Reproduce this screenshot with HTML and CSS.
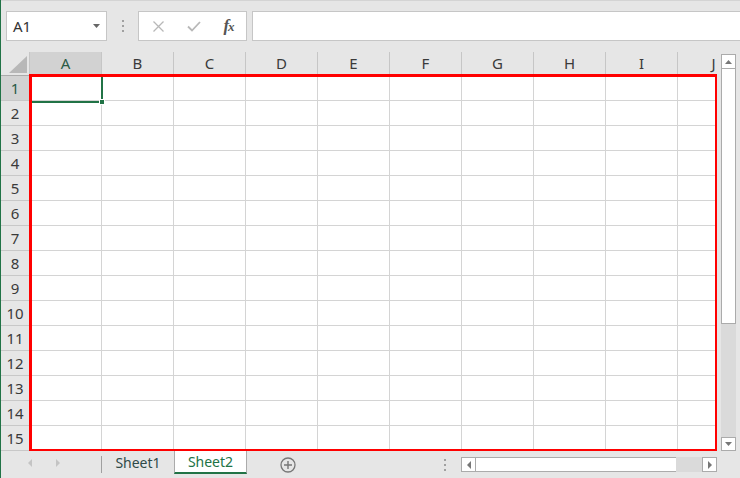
FILE: index.html
```html
<!DOCTYPE html>
<html lang="ja">
<head>
    <meta charset="UTF-8">
    <meta name="viewport" content="width=device-width, initial-scale=1.0">
    <title>Book1 - Excel</title>
    <link rel="stylesheet" href="styles.css">
</head>
<body>
<div class="app">
    <div class="toolbar">
        <div class="namebox">
            <span>A1</span>
            <svg width="7" height="4" viewBox="0 0 7 4"><path d="M0 0h7L3.5 4z" fill="#666"/></svg>
        </div>
        <div class="grip"><i></i><i></i><i></i></div>
        <div class="fbuttons">
            <div class="fbtn">
                <svg width="11" height="11" viewBox="0 0 11 11"><path d="M0.5 0.5L10.5 10.5M10.5 0.5L0.5 10.5" stroke="#b8b8b8" stroke-width="1.3" fill="none"/></svg>
            </div>
            <div class="fbtn">
                <svg width="14" height="11" viewBox="0 0 14 11"><path d="M1 5.5L5 9.5L13 1" stroke="#b8b8b8" stroke-width="1.8" fill="none"/></svg>
            </div>
            <div class="fbtn"><span class="fx">f<span>x</span></span></div>
        </div>
        <div class="formula"></div>
    </div>

    <div class="main">
        <div class="sheet">
            <div class="row head">
                <div class="corner">
                    <svg width="18" height="17" viewBox="0 0 18 17"><path d="M18 0V17H0z" fill="#b8b8b8"/></svg>
                </div>
                <div class="ch sel">A</div><div class="ch">B</div><div class="ch">C</div><div class="ch">D</div><div class="ch">E</div><div class="ch">F</div><div class="ch">G</div><div class="ch">H</div><div class="ch">I</div><div class="ch">J</div>
            </div>
            <div class="row"><div class="rh sel">1</div><i></i><i></i><i></i><i></i><i></i><i></i><i></i><i></i><i></i><i></i></div>
            <div class="row"><div class="rh">2</div><i></i><i></i><i></i><i></i><i></i><i></i><i></i><i></i><i></i><i></i></div>
            <div class="row"><div class="rh">3</div><i></i><i></i><i></i><i></i><i></i><i></i><i></i><i></i><i></i><i></i></div>
            <div class="row"><div class="rh">4</div><i></i><i></i><i></i><i></i><i></i><i></i><i></i><i></i><i></i><i></i></div>
            <div class="row"><div class="rh">5</div><i></i><i></i><i></i><i></i><i></i><i></i><i></i><i></i><i></i><i></i></div>
            <div class="row"><div class="rh">6</div><i></i><i></i><i></i><i></i><i></i><i></i><i></i><i></i><i></i><i></i></div>
            <div class="row"><div class="rh">7</div><i></i><i></i><i></i><i></i><i></i><i></i><i></i><i></i><i></i><i></i></div>
            <div class="row"><div class="rh">8</div><i></i><i></i><i></i><i></i><i></i><i></i><i></i><i></i><i></i><i></i></div>
            <div class="row"><div class="rh">9</div><i></i><i></i><i></i><i></i><i></i><i></i><i></i><i></i><i></i><i></i></div>
            <div class="row"><div class="rh">10</div><i></i><i></i><i></i><i></i><i></i><i></i><i></i><i></i><i></i><i></i></div>
            <div class="row"><div class="rh">11</div><i></i><i></i><i></i><i></i><i></i><i></i><i></i><i></i><i></i><i></i></div>
            <div class="row"><div class="rh">12</div><i></i><i></i><i></i><i></i><i></i><i></i><i></i><i></i><i></i><i></i></div>
            <div class="row"><div class="rh">13</div><i></i><i></i><i></i><i></i><i></i><i></i><i></i><i></i><i></i><i></i></div>
            <div class="row"><div class="rh">14</div><i></i><i></i><i></i><i></i><i></i><i></i><i></i><i></i><i></i><i></i></div>
            <div class="row"><div class="rh">15</div><i></i><i></i><i></i><i></i><i></i><i></i><i></i><i></i><i></i><i></i></div>

            <!-- active cell A1 -->
            <div class="cursor"></div>
            <div class="handle"></div>
            <!-- red highlight -->
            <div class="mark"></div>
        </div>

        <div class="vscroll">
            <div class="sbtn">
                <svg width="7" height="4" viewBox="0 0 7 4"><path d="M3.5 0L7 4H0z" fill="#777"/></svg>
            </div>
            <div class="vthumb"></div>
            <div class="vtrack"></div>
            <div class="sbtn down">
                <svg width="7" height="4" viewBox="0 0 7 4"><path d="M0 0h7L3.5 4z" fill="#777"/></svg>
            </div>
        </div>
    </div>

    <div class="tabbar">
        <div class="tabnav">
            <svg width="4" height="8" viewBox="0 0 4 8"><path d="M4 0V8L0 4z" fill="#c4c4c4"/></svg>
            <svg width="4" height="8" viewBox="0 0 4 8"><path d="M0 0V8L4 4z" fill="#c4c4c4"/></svg>
        </div>
        <div class="tabsep"></div>
        <div class="tab">Sheet1</div>
        <div class="tab active">Sheet2</div>
        <div class="addsheet">
            <svg width="16" height="16" viewBox="0 0 16 16">
                <circle cx="8" cy="8" r="7" stroke="#777" stroke-width="1.3" fill="none"/>
                <path d="M8 4V12M4 8H12" stroke="#777" stroke-width="1.4"/>
            </svg>
        </div>
        <div class="spacer"></div>
        <div class="grip small"><i></i><i></i><i></i></div>
        <div class="hscroll">
            <div class="sbtn">
                <svg width="4" height="8" viewBox="0 0 4 8"><path d="M4 0V8L0 4z" fill="#777"/></svg>
            </div>
            <div class="hthumb"></div>
            <div class="htrack"></div>
            <div class="sbtn">
                <svg width="4" height="8" viewBox="0 0 4 8"><path d="M0 0V8L4 4z" fill="#777"/></svg>
            </div>
        </div>
    </div>
</div>
</body>
</html>
```

FILE: styles.css
```css
body {
    margin: 0;
    padding: 0;
    background-color: #e6e6e6;
    font-family: "Noto Sans", "Noto Sans CJK JP", sans-serif;
    color: #3a3a3a;
    overflow: hidden;
}
.app {
    width: 739px;
    height: 478px;
    border-left: 1px solid #217346;
    display: flex;
    flex-direction: column;
    overflow: hidden;
}

/* name box + formula bar */
.toolbar {
    height: 52px;
    flex: none;
    box-sizing: border-box;
    border-top: 1px solid #d4d4d4;
    padding: 10px 0 0 5px;
    display: flex;
    align-items: flex-start;
}
.namebox {
    width: 101px;
    height: 30px;
    box-sizing: border-box;
    background-color: #fff;
    border: 1px solid #c6c6c6;
    padding: 0 6px;
    display: flex;
    align-items: center;
    justify-content: space-between;
    font-size: 15px;
    color: #333;
}
.grip {
    width: 2px;
    height: 30px;
    margin: 0 14px 0 15px;
    display: flex;
    flex-direction: column;
    justify-content: center;
    gap: 3px;
}
.grip i {
    display: block;
    width: 2px;
    height: 2px;
    background-color: #a0a0a0;
}
.fbuttons {
    width: 109px;
    height: 30px;
    box-sizing: border-box;
    background-color: #fff;
    border: 1px solid #c6c6c6;
    padding-left: 2px;
    display: flex;
}
.fbtn {
    width: 35px;
    display: flex;
    align-items: center;
    justify-content: center;
}
.fx {
    font-family: "Liberation Serif", serif;
    font-style: italic;
    font-weight: bold;
    font-size: 17px;
    letter-spacing: -1px;
    color: #555;
}
.fx span {
    font-size: 13px;
}
.formula {
    flex: 1;
    height: 30px;
    box-sizing: border-box;
    margin: 0 -2px 0 5px;
    background-color: #fff;
    border: 1px solid #c6c6c6;
}

/* grid */
.main {
    height: 399px;
    flex: none;
    display: flex;
}
.sheet {
    width: 716px;
    flex: none;
    position: relative;
    overflow: hidden;
    background-color: #fff;
}
.row {
    display: flex;
    height: 25px;
}
.row i {
    width: 72px;
    flex: none;
    box-sizing: border-box;
    border-left: 1px solid #d4d4d4;
    border-bottom: 1px solid #d4d4d4;
}
.rh {
    width: 28px;
    flex: none;
    box-sizing: border-box;
    background-color: #e6e6e6;
    border-bottom: 1px solid #c8c8c8;
    text-align: center;
    font-size: 15px;
    line-height: 24px;
}
.head {
    height: 24px;
    background-color: #e6e6e6;
}
.corner {
    width: 28px;
    flex: none;
    box-sizing: border-box;
    border-bottom: 1px solid #ababab;
    padding: 4px 0 0 8px;
}
.corner svg {
    display: block;
}
.ch {
    width: 72px;
    flex: none;
    box-sizing: border-box;
    border-left: 1px solid #c6c6c6;
    border-bottom: 1px solid #ababab;
    text-align: center;
    font-size: 15px;
    line-height: 23px;
}
.sel {
    background-color: #d2d2d2;
    color: #2a5a46;
}
.cursor {
    position: absolute;
    left: 28px;
    top: 22px;
    width: 74px;
    height: 29px;
    box-sizing: border-box;
    border: 2px solid #217346;
}
.handle {
    position: absolute;
    left: 98px;
    top: 47px;
    width: 6px;
    height: 6px;
    box-sizing: border-box;
    background-color: #217346;
    border: 1px solid #fff;
}
.mark {
    position: absolute;
    left: 28px;
    top: 22px;
    width: 688px;
    height: 377px;
    box-sizing: border-box;
    border: 3px solid #ff0000;
    border-right-width: 2px;
    border-bottom-width: 2px;
}

/* scroll bars */
.vscroll {
    flex: 1;
    padding: 2px 0 0 4px;
    display: flex;
    flex-direction: column;
    width: 15px;
}
.vscroll > div {
    width: 15px;
}
.sbtn {
    width: 15px;
    height: 15px;
    flex: none;
    box-sizing: border-box;
    background-color: #fff;
    border: 1px solid #ababab;
    display: flex;
    align-items: center;
    justify-content: center;
}
.sbtn.down {
    height: 14px;
}
.vthumb {
    height: 255px;
    flex: none;
    box-sizing: border-box;
    background-color: #fff;
    border: 1px solid #ababab;
    border-top: none;
}
.vtrack {
    flex: 1;
    background-color: #dadada;
}

/* sheet tabs */
.tabbar {
    flex: 1;
    display: flex;
    align-items: flex-start;
}
.tabnav {
    width: 100px;
    height: 27px;
    box-sizing: border-box;
    padding: 8px 0 0 27px;
    display: flex;
    gap: 24px;
}
.tabnav svg {
    display: block;
}
.tabsep {
    width: 1px;
    height: 17px;
    margin-top: 5px;
    background-color: #a0a0a0;
}
.tab {
    width: 72px;
    height: 23px;
    box-sizing: border-box;
    text-align: center;
    font-size: 14px;
    line-height: 23px;
    color: #2f4a48;
}
.tab.active {
    width: 73px;
    margin-top: -1px;
    height: 24px;
    background-color: #fff;
    border-left: 1px solid #ababab;
    border-right: 1px solid #ababab;
    border-bottom: 2px solid #217346;
    color: #217346;
}
.addsheet {
    margin: 6px 0 0 33px;
}
.addsheet svg {
    display: block;
}
.spacer {
    flex: 1;
}
.grip.small {
    height: 12px;
    margin: 8px 15px 0 0;
}
.hscroll {
    width: 256px;
    height: 15px;
    margin: 6px 23px 0 0;
    display: flex;
}
.hthumb {
    width: 200px;
    box-sizing: border-box;
    background-color: #fff;
    border-top: 1px solid #ababab;
    border-bottom: 1px solid #ababab;
}
.htrack {
    width: 26px;
    background-color: #dadada;
}
```
